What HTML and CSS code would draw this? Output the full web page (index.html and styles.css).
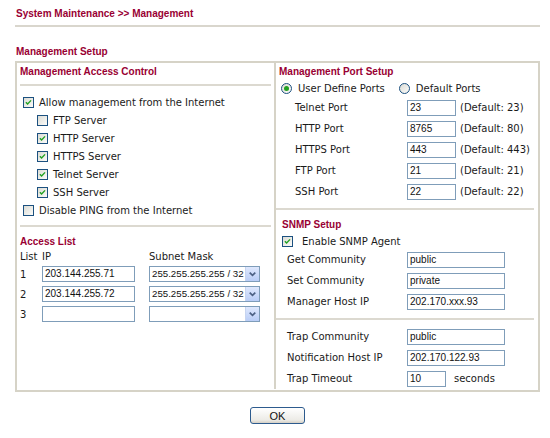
FILE: index.html
```html
<!DOCTYPE html>
<html lang="en">
  <head>
    <meta charset="UTF-8" />
    <title>System Maintenance &gt;&gt; Management</title>
    <link rel="stylesheet" href="styles.css">
  </head>
  <body>
    <div class="page">
      <div class="crumb">System Maintenance &gt;&gt; Management</div>
      <div class="setup-title">Management Setup</div>

      <div class="setup">
        <!-- left column -->
        <div class="col col-left">
          <div class="head">Management Access Control</div>
          <div class="rule"></div>
          <div class="checks">
            <div class="chk"><span class="cb on"><svg viewBox="0 0 11 11"><path d="M2.3 5.2 L4.4 7.4 L8.6 2.9"/></svg></span>Allow management from the Internet</div>
            <div class="chk sub"><span class="cb"></span>FTP Server</div>
            <div class="chk sub"><span class="cb on"><svg viewBox="0 0 11 11"><path d="M2.3 5.2 L4.4 7.4 L8.6 2.9"/></svg></span>HTTP Server</div>
            <div class="chk sub"><span class="cb on"><svg viewBox="0 0 11 11"><path d="M2.3 5.2 L4.4 7.4 L8.6 2.9"/></svg></span>HTTPS Server</div>
            <div class="chk sub"><span class="cb on"><svg viewBox="0 0 11 11"><path d="M2.3 5.2 L4.4 7.4 L8.6 2.9"/></svg></span>Telnet Server</div>
            <div class="chk sub"><span class="cb on"><svg viewBox="0 0 11 11"><path d="M2.3 5.2 L4.4 7.4 L8.6 2.9"/></svg></span>SSH Server</div>
            <div class="chk"><span class="cb"></span>Disable PING from the Internet</div>
          </div>
          <div class="rule rule-gap"></div>
          <div class="head head-gap">Access List</div>
          <div class="acl">
            <div class="acl-row acl-top"><span>List</span><span>IP</span><span>Subnet Mask</span></div>
            <div class="acl-row">
              <span>1</span>
              <span class="field ip">203.144.255.71</span>
              <span class="sel"><span class="sel-text">255.255.255.255 / 32</span><span class="sel-btn"><svg viewBox="0 0 14 14"><path d="M4 5.5 L7 8.5 L10 5.5"/></svg></span></span>
            </div>
            <div class="acl-row">
              <span>2</span>
              <span class="field ip">203.144.255.72</span>
              <span class="sel"><span class="sel-text">255.255.255.255 / 32</span><span class="sel-btn"><svg viewBox="0 0 14 14"><path d="M4 5.5 L7 8.5 L10 5.5"/></svg></span></span>
            </div>
            <div class="acl-row">
              <span>3</span>
              <span class="field ip"></span>
              <span class="sel"><span class="sel-text"></span><span class="sel-btn"><svg viewBox="0 0 14 14"><path d="M4 5.5 L7 8.5 L10 5.5"/></svg></span></span>
            </div>
          </div>
        </div>

        <!-- right column -->
        <div class="col col-right">
          <div class="head">Management Port Setup</div>
          <div class="radios">
            <span class="opt"><span class="rd on"></span>User Define Ports</span>
            <span class="opt"><span class="rd"></span>Default Ports</span>
          </div>
          <div class="ports">
            <div class="port"><span class="lbl">Telnet Port</span><span class="field port-in">23</span><span class="hint">(Default: 23)</span></div>
            <div class="port"><span class="lbl">HTTP Port</span><span class="field port-in">8765</span><span class="hint">(Default: 80)</span></div>
            <div class="port"><span class="lbl">HTTPS Port</span><span class="field port-in">443</span><span class="hint">(Default: 443)</span></div>
            <div class="port"><span class="lbl">FTP Port</span><span class="field port-in">21</span><span class="hint">(Default: 21)</span></div>
            <div class="port"><span class="lbl">SSH Port</span><span class="field port-in">22</span><span class="hint">(Default: 22)</span></div>
          </div>
          <div class="rule rule-gap"></div>
          <div class="head head-gap snmp-head">SNMP Setup</div>
          <div class="chk snmp-chk"><span class="cb on"><svg viewBox="0 0 11 11"><path d="M2.3 5.2 L4.4 7.4 L8.6 2.9"/></svg></span>Enable SNMP Agent</div>
          <div class="snmp">
            <div class="port"><span class="lbl">Get Community</span><span class="field wide">public</span></div>
            <div class="port"><span class="lbl">Set Community</span><span class="field wide">private</span></div>
            <div class="port"><span class="lbl">Manager Host IP</span><span class="field wide">202.170.xxx.93</span></div>
          </div>
          <div class="rule rule-gap"></div>
          <div class="snmp trap">
            <div class="port"><span class="lbl">Trap Community</span><span class="field wide">public</span></div>
            <div class="port"><span class="lbl">Notification Host IP</span><span class="field wide">202.170.122.93</span></div>
            <div class="port"><span class="lbl">Trap Timeout</span><span class="field short">10</span><span class="unit">seconds</span></div>
          </div>
        </div>
      </div>

      <div class="actions">
        <button class="btn" type="button">OK</button>
      </div>
    </div>
  </body>
</html>
```

FILE: styles.css
```css
html, body {
  margin: 0;
  padding: 0;
}
body {
  background: #fff;
  color: #1a1a1a;
  font-family: 'DejaVu Sans', Verdana, sans-serif;
  font-size: 10px;
}

.page {
  width: 525px;
  padding-left: 15px;
}

/* titles */
.crumb,
.setup-title,
.head {
  font-family: 'Liberation Sans', Arial, sans-serif;
  font-weight: bold;
  font-size: 10px;
  color: #990033;
}
.crumb {
  padding: 8px 0 5px 1px;
  line-height: 12px;
  border-bottom: 2px solid #d9d6cd;
}
.setup-title {
  margin-top: 19px;
  padding-left: 1px;
  line-height: 12px;
}

/* main box */
.setup {
  margin-top: 3px;
  border: 2px solid #d6d3c7;
  display: grid;
  grid-template-columns: 259px 1fr;
  padding-bottom: 1px;
}
.col-left {
  border-right: 2px solid #d6d3c7;
}
.head {
  height: 17px;
  line-height: 17px;
  padding-left: 3px;
}
.head-gap {
  margin-top: 6px;
}
.rule {
  height: 2px;
  background: #dcd9d0;
  margin: 4px 3px 0 3px;
}
.rule-gap {
  margin-top: 6px;
}

/* checkboxes */
.checks {
  margin-top: 7px;
}
.chk {
  height: 18px;
  display: flex;
  align-items: center;
  padding-left: 6px;
}
.chk.sub {
  padding-left: 20px;
}
.cb {
  width: 11px;
  height: 11px;
  box-sizing: border-box;
  border: 1px solid #1c5180;
  background: linear-gradient(135deg, #dcdcd5, #fbfbf9);
  margin-right: 5px;
  flex: none;
  display: flex;
}
.cb svg {
  width: 9px;
  height: 9px;
}
.cb path {
  fill: none;
  stroke: #21a121;
  stroke-width: 1.7;
}

/* access list */
.acl {
  padding-left: 3px;
}
.acl-row {
  display: grid;
  grid-template-columns: 22px 107px 111px;
  align-items: center;
  height: 20px;
}
.acl-top {
  height: 14px;
  line-height: 14px;
}
.field {
  display: block;
  box-sizing: border-box;
  height: 16px;
  border: 1px solid #7f9db9;
  background: #fff;
  font-family: 'Liberation Sans', Arial, sans-serif;
  font-size: 10px;
  line-height: 14px;
  padding-left: 2px;
  color: #111;
}
.ip {
  width: 93px;
}
.sel {
  display: flex;
  box-sizing: border-box;
  height: 16px;
  width: 111px;
  border: 1px solid #7f9db9;
  font-family: 'Liberation Sans', Arial, sans-serif;
  font-size: 9.7px;
  line-height: 14px;
  color: #111;
}
.sel-text {
  flex: 1;
  padding-left: 2px;
  white-space: nowrap;
  overflow: hidden;
}
.sel-btn {
  width: 13px;
  height: 14px;
  flex: none;
  background: linear-gradient(#dfe8fd, #b9cdf6);
  border-left: 1px solid #c6d4f0;
}
.sel-btn svg {
  width: 13px;
  height: 14px;
  display: block;
}
.sel-btn path {
  fill: none;
  stroke: #4d6185;
  stroke-width: 1.8;
}

/* right column */
.col-right .head {
  padding-left: 3px;
}
.col-right .rule {
  margin-left: 0;
  margin-right: 4px;
}
.radios {
  height: 17px;
  display: flex;
  align-items: center;
  padding-left: 5px;
  gap: 14px;
}
.opt {
  display: flex;
  align-items: center;
}
.rd {
  width: 11px;
  height: 11px;
  box-sizing: border-box;
  border: 1px solid #1c5180;
  border-radius: 50%;
  background: linear-gradient(135deg, #dcdcd5, #fbfbf9);
  margin-right: 6px;
  display: flex;
  align-items: center;
  justify-content: center;
}
.rd.on::after {
  content: "";
  width: 5px;
  height: 5px;
  border-radius: 50%;
  background: #21a121;
}
.port {
  height: 21px;
  display: flex;
  align-items: center;
  padding-left: 19px;
}
.port .lbl {
  width: 112px;
  flex: none;
}
.port-in {
  width: 49px;
}
.hint {
  margin-left: 4px;
}
.snmp-head {
  padding-left: 6px !important;
}
.snmp-chk {
  height: 16px;
  padding-left: 6px;
}
.snmp-chk .cb {
  margin-right: 9px;
}
.snmp .port {
  padding-left: 11px;
}
.snmp .lbl {
  width: 120px;
}
.wide {
  width: 98px;
}
.short {
  width: 39px;
}
.unit {
  margin-left: 8px;
}
.trap {
  margin-top: 6px;
}

/* button */
.actions {
  display: flex;
  justify-content: center;
  margin-top: 15px;
}
.btn {
  width: 55px;
  height: 17px;
  padding: 0;
  border: 1px solid #2d5b8e;
  border-radius: 3px;
  background: linear-gradient(#ffffff, #ecebe6 80%, #d6d0c5);
  font-family: 'Liberation Sans', Arial, sans-serif;
  font-size: 11px;
  color: #111;
}
```
